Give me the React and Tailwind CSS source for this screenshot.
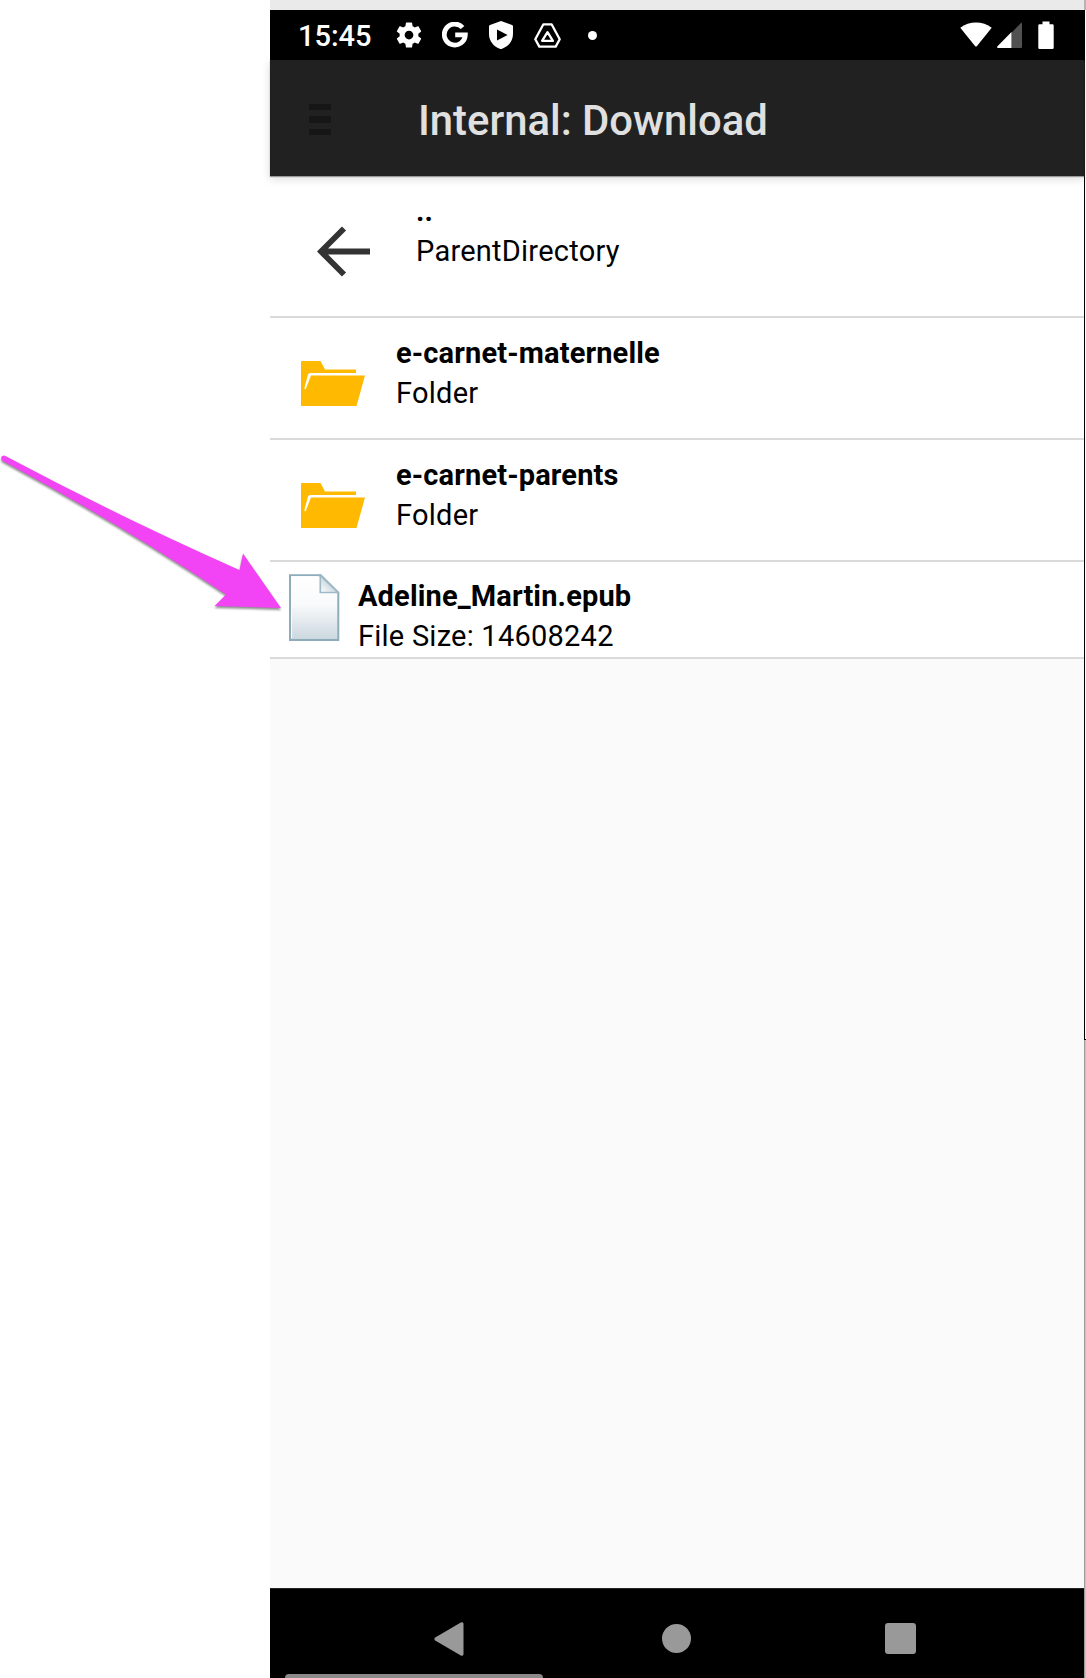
import React from "react";

function GearIcon() {
  return (
    <svg width="30" height="30" viewBox="0 0 24 24" fill="#fff" className="shrink-0">
      <path fillRule="evenodd" d="M19.43 12.98c.04-.32.07-.64.07-.98s-.03-.66-.07-.98l2.11-1.65c.19-.15.24-.42.12-.64l-2-3.46c-.12-.22-.39-.3-.61-.22l-2.49 1c-.52-.4-1.08-.73-1.69-.98l-.38-2.65A.488.488 0 0 0 14 2h-4c-.25 0-.46.18-.49.42l-.38 2.65c-.61.25-1.17.59-1.69.98l-2.49-1c-.23-.09-.49 0-.61.22l-2 3.46c-.13.22-.07.49.12.64l2.11 1.65c-.04.32-.07.65-.07.98s.03.66.07.98l-2.11 1.65c-.19.15-.24.42-.12.64l2 3.46c.12.22.39.3.61.22l2.49-1c.52.4 1.08.73 1.69.98l.38 2.65c.03.24.24.42.49.42h4c.25 0 .46-.18.49-.42l.38-2.65c.61-.25 1.17-.59 1.69-.98l2.49 1c.23.09.49 0 .61-.22l2-3.46c.12-.22.07-.49-.12-.64l-2.11-1.65zM12 15.5c-1.930 0-3.500-1.570-3.500-3.500s1.570-3.500 3.500-3.500 3.500 1.570 3.500 3.500-1.570 3.500-3.500 3.500z" />
    </svg>
  );
}

function GoogleIcon() {
  return (
    <svg width="26" height="26" viewBox="0 0 26 26" fill="none" stroke="#fff" strokeWidth="4.800" className="shrink-0">
      <path d="M20.600 5.500 A10.500 10.500 0 1 0 23.300 12.900 H13.200" />
    </svg>
  );
}

function ShieldIcon() {
  return (
    <svg width="24" height="28" viewBox="0 0 24 28" className="shrink-0">
      <path fill="#fff" fillRule="evenodd" d="M12 0 L23 4 Q24 4.400 24 5.500 V13 C24 20.500 19 26 12 28.200 C5 26 0 20.500 0 13 V5.500 Q0 4.400 1 4 Z M8 8.600 V19.400 L18.600 14 Z" />
    </svg>
  );
}

function DriveIcon() {
  return (
    <svg width="27" height="25" viewBox="0 0 27 25" fill="none" stroke="#fff" strokeWidth="2.300" strokeLinejoin="round" className="shrink-0">
      <path d="M9.400 1.300 H17.600 L25.700 16.200 L21.700 23.600 H5.300 L1.300 16.200 Z" />
      <path d="M13.500 9.200 L18.900 17.800 H8.100 Z" />
    </svg>
  );
}

function StatusBar() {
  return (
    <div className="flex h-[50px] items-center bg-black pl-[28px] pr-[30px]">
      <span className="mt-[2px] w-[83px] whitespace-nowrap text-[29px] leading-[50px] font-medium text-white">15:45</span>
      <div className="ml-[13px] flex items-center">
        <GearIcon />
        <div className="ml-[18px] flex"><GoogleIcon /></div>
        <div className="ml-[21px] flex"><ShieldIcon /></div>
        <div className="ml-[21px] flex"><DriveIcon /></div>
        <div className="ml-[27px] size-[9px] rounded-full bg-white" />
      </div>
      <div className="ml-auto flex items-center">
        <svg width="32" height="25" viewBox="0 0 32 25" className="-mt-[2px]">
          <path fill="#fff" d="M0.300 5.700 C9 -1.200 23 -1.200 31.700 5.700 L17 24 Q16 25.200 15 24 Z" />
        </svg>
        <svg width="25" height="26" viewBox="0 0 25 26" className="ml-[5px]">
          <path fill="#515151" d="M14.500 10.700 L24 0.900 Q25 0.300 25 1.500 V25 Q25 26 24 26 H14.500 Z" />
          <path fill="#fff" d="M14.500 10 V26 H1 Q-0.500 25.600 0.500 24.200 Z" />
        </svg>
        <svg width="16" height="28" viewBox="0 0 16 28" className="ml-[16px]">
          <path fill="#fff" d="M4.500 0.500 H11.500 V3.300 H14.500 Q15.700 3.300 15.700 4.500 V26.700 Q15.700 27.900 14.500 27.900 H1.500 Q0.300 27.900 0.300 26.700 V4.500 Q0.300 3.300 1.500 3.300 H4.500 Z" />
        </svg>
      </div>
    </div>
  );
}

function AppBar() {
  return (
    <div className="relative z-10 flex h-[116px] items-center bg-[#212121] pl-[39px] shadow-[0_1px_1px_#999,0_3px_9px_rgba(0,0,0,0.14)]">
      <div className="mt-[3px] flex w-[22px] flex-col gap-[6px]">
        <div className="h-[6.500px] bg-[#161616]" />
        <div className="h-[6.500px] bg-[#161616]" />
        <div className="h-[6.500px] bg-[#161616]" />
      </div>
      <h1 className="ml-[87px] mt-[6px] whitespace-nowrap text-[41.800px] leading-[50px] font-medium text-[#e0e0e0]">Internal: Download</h1>
    </div>
  );
}

function FolderIcon() {
  return (
    <svg width="66" height="48" viewBox="0 0 66 48" className="ml-[30px] mt-[42px] shrink-0">
      <path fill="#ffb900" d="M1 2 Q1 1 2 1 H20.500 L25 9.500 H56 V13 H10.300 Q8.500 13 8 14.500 L4.300 28.500 L5.600 29.500 L11 15.500 H65 L56.500 46 H1 Z" />
    </svg>
  );
}

function FileIcon() {
  return (
    <svg width="52" height="68" viewBox="0 0 52 68" className="ml-[18px] mt-[11px] shrink-0">
      <defs>
        <linearGradient id="paper" x1="0" y1="0" x2="0" y2="1">
          <stop offset="0" stopColor="#fff" />
          <stop offset=".45" stopColor="#f9fafb" />
          <stop offset="1" stopColor="#cbd7df" />
        </linearGradient>
        <linearGradient id="fold" x1="0" y1="1" x2=".6" y2=".4">
          <stop offset="0" stopColor="#fff" />
          <stop offset="1" stopColor="#c5d3da" />
        </linearGradient>
      </defs>
      <path fill="url(#paper)" stroke="#8dadbb" strokeWidth="2" d="M2 2.200 H32.800 L50.300 19.700 V67 H2 Z" />
      <path fill="none" stroke="#fff" strokeWidth="1" d="M3.500 65 V3.700 H30" />
      <path fill="url(#fold)" stroke="#9fbac6" strokeWidth="1.700" d="M32.300 2.500 V19.500 H50 Z" />
    </svg>
  );
}

function Row({ icon, title, detail, row, text }) {
  return (
    <div className={"flex items-start border-b-2 border-[#dadada] bg-white text-black " + row}>
      {icon}
      <div className={"whitespace-nowrap text-[29px] leading-[40px] " + text}>
        <div className="font-bold tracking-[0.140px]">{title}</div>
        <div className="tracking-[0.240px]">{detail}</div>
      </div>
    </div>
  );
}

function NavBar() {
  return (
    <div className="relative h-[90px] border-t border-[#222] bg-black">
      <div className="flex h-[99px] items-center pl-[164px]">
        <svg width="30" height="34" viewBox="0 0 30 34">
          <path fill="#999" d="M1.200 15.500 L26.800 0.600 Q29.500 -0.500 29.500 2 V32 Q29.500 34.500 26.800 33.400 L1.200 18.500 Q-0.500 17 1.200 15.500 Z" />
        </svg>
        <div className="ml-[198px] size-[29px] rounded-full bg-[#999]" />
        <div className="ml-[194px] size-[31px] rounded-[3px] bg-[#999]" />
      </div>
      <div className="absolute bottom-0 left-[15px] h-[4px] w-[258px] rounded-t-[6px] bg-[#8b8989]" />
    </div>
  );
}

export default function App() {
  return (
    <div className="relative flex h-[1678px] w-[1086px] overflow-hidden bg-white font-['Roboto',sans-serif]">
      <div className="w-[270px] shrink-0" />
      <div className="flex w-[814px] shrink-0 flex-col">
        <div className="h-[10px] bg-[#eaeaea]" />
        <StatusBar />
        <AppBar />
        <Row
          row="h-[142px]"
          text="ml-[45px] mt-[15px]"
          icon={
            <svg width="54" height="52" viewBox="0 0 54 52" fill="none" stroke="#333" strokeWidth="5.800" className="ml-[47px] mt-[49px] shrink-0">
              <path d="M27 3.500 L4 26.500 L27 49.500 M4.500 26.500 H53" />
            </svg>
          }
          title=".."
          detail="ParentDirectory"
        />
        <Row row="h-[122px]" text="ml-[30px] mt-[15px]" icon={<FolderIcon />} title="e-carnet-maternelle" detail="Folder" />
        <Row row="h-[122px]" text="ml-[30px] mt-[15px]" icon={<FolderIcon />} title="e-carnet-parents" detail="Folder" />
        <Row row="h-[97px]" text="ml-[18px] mt-[14px]" icon={<FileIcon />} title="Adeline_Martin.epub" detail="File Size: 14608242" />
        <div className="flex-1 bg-[#fafafa]" />
        <NavBar />
      </div>
      <div className="flex w-[2px] flex-col">
        <div className="h-[10px] bg-[#b5b5b5]" />
        <div className="h-[1030px] border-b border-l border-black" />
        <div className="flex-1 border-l border-[#9c9c9c] bg-[#c4c4c4]" />
      </div>
      <svg width="290" height="180" viewBox="0 0 290 180" className="absolute left-0 top-[440px] [filter:drop-shadow(0_2px_1px_rgba(0,0,0,0.45))]">
        <path fill="#f244f4" d="M4.500 15.500 Q120 77 239.500 130 L243 113.500 L281 168 L214.500 166 L226 154.500 Q120 84 2 20.500 Q-0.500 16 4.500 15.500 Z" />
      </svg>
    </div>
  );
}
